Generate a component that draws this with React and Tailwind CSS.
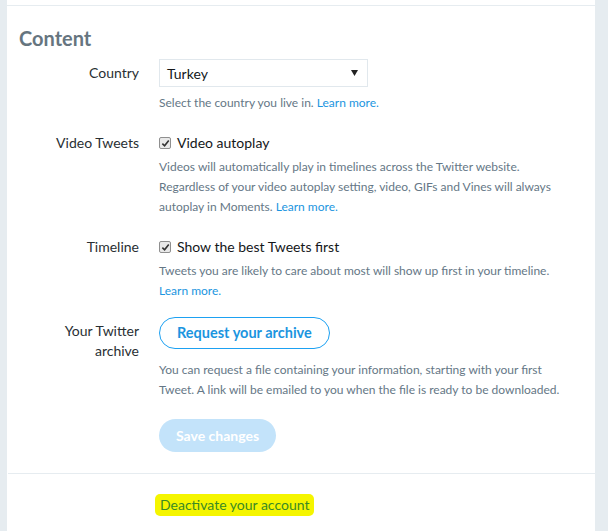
import React from 'react'

const font = { fontFamily: '"Lato", "Liberation Sans", sans-serif' }

function Check() {
  return (
    <span className="flex h-[12px] w-[12px] shrink-0 items-center justify-center rounded-[2px] border border-[#8f8f8f] bg-[#e9e9e9]">
      <svg width="9" height="9" viewBox="0 0 10 10">
        <path d="M1.5 5.2 L4 7.6 L8.6 1.8" fill="none" stroke="#333" strokeWidth="1.8" />
      </svg>
    </span>
  )
}

function Row({ label, children, className = '', labelClass = '' }) {
  return (
    <div className={`flex gap-5 ${className}`}>
      <div className={`w-[120px] shrink-0 text-right text-[14px] leading-[20px] text-[#292f33] ${labelClass}`}>{label}</div>
      <div className="min-w-0 flex-1">{children}</div>
    </div>
  )
}

function Link({ children }) {
  return <a className="text-[#1b95e0]">{children}</a>
}

function Help({ children, className = '' }) {
  return <p className={`whitespace-nowrap text-[12px] leading-[20px] text-[#657786] ${className}`}>{children}</p>
}

export default function App() {
  return (
    <div className="flex h-[531px] w-[608px] bg-[#e6ecf0] pl-[7px] pr-[13px]" style={font}>
      <div className="flex flex-1 flex-col bg-white">
        <div className="mt-[5px] h-px bg-[#e6ecf0]" />

        <div className="px-3 pb-[21px]">
          <h2 className="mt-[20px] text-[20px] font-bold leading-[24px] text-[#66757f]">Content</h2>

          <Row label="Country" className="mt-[9px]" labelClass="pt-[4px]">
            <div className="flex h-[28px] w-[209px] items-center justify-between border border-[#e1e8ed] pl-[7px] pr-[9px] text-[14px] text-[#14171a]">
              <span>Turkey</span>
              <svg width="7" height="6" viewBox="0 0 7 6">
                <path d="M0 0 H7 L3.5 6 Z" fill="#222" />
              </svg>
            </div>
            <Help className="mt-[6px]">
              Select the country you live in. <Link>Learn more.</Link>
            </Help>
          </Row>

          <Row label="Video Tweets" className="mt-[20px]">
            <label className="flex items-center gap-[6px] text-[14px] leading-[20px] text-[#14171a]">
              <Check />
              Video autoplay
            </label>
            <Help className="mt-[4px]">
              Videos will automatically play in timelines across the Twitter website.
              <br />
              Regardless of your video autoplay setting, video, GIFs and Vines will always
              <br />
              autoplay in Moments. <Link>Learn more.</Link>
            </Help>
          </Row>

          <Row label="Timeline" className="mt-[20px]">
            <label className="flex items-center gap-[6px] text-[14px] leading-[20px] text-[#14171a]">
              <Check />
              Show the best Tweets first
            </label>
            <Help className="mt-[4px]">
              Tweets you are likely to care about most will show up first in your timeline.
              <br />
              <Link>Learn more.</Link>
            </Help>
          </Row>

          <Row label={<>Your Twitter<br />archive</>} className="mt-[16px]" labelClass="pt-[4px]">
            <button className="h-[32px] rounded-full border border-[#1da1f2] px-[17px] text-[14.5px] font-bold text-[#1b95e0]">
              Request your archive
            </button>
            <Help className="mt-[11px]">
              You can request a file containing your information, starting with your first
              <br />
              Tweet. A link will be emailed to you when the file is ready to be downloaded.
            </Help>
            <button className="mt-[19px] h-[33px] rounded-full bg-[#c3e3fa] px-[17px] text-[14px] font-bold text-white">
              Save changes
            </button>
          </Row>
        </div>

        <div className="ml-px h-px bg-[#e6ecf0]" />

        <div className="px-3 pt-[18px]">
          <Row label="">
            <span className="-ml-[4px] inline-block rounded-[5px] bg-[#f5f500] px-[5px] py-[2px] text-[14px] leading-[18px] text-[#3a8a25]">
              Deactivate your account
            </span>
          </Row>
        </div>
      </div>
    </div>
  )
}
